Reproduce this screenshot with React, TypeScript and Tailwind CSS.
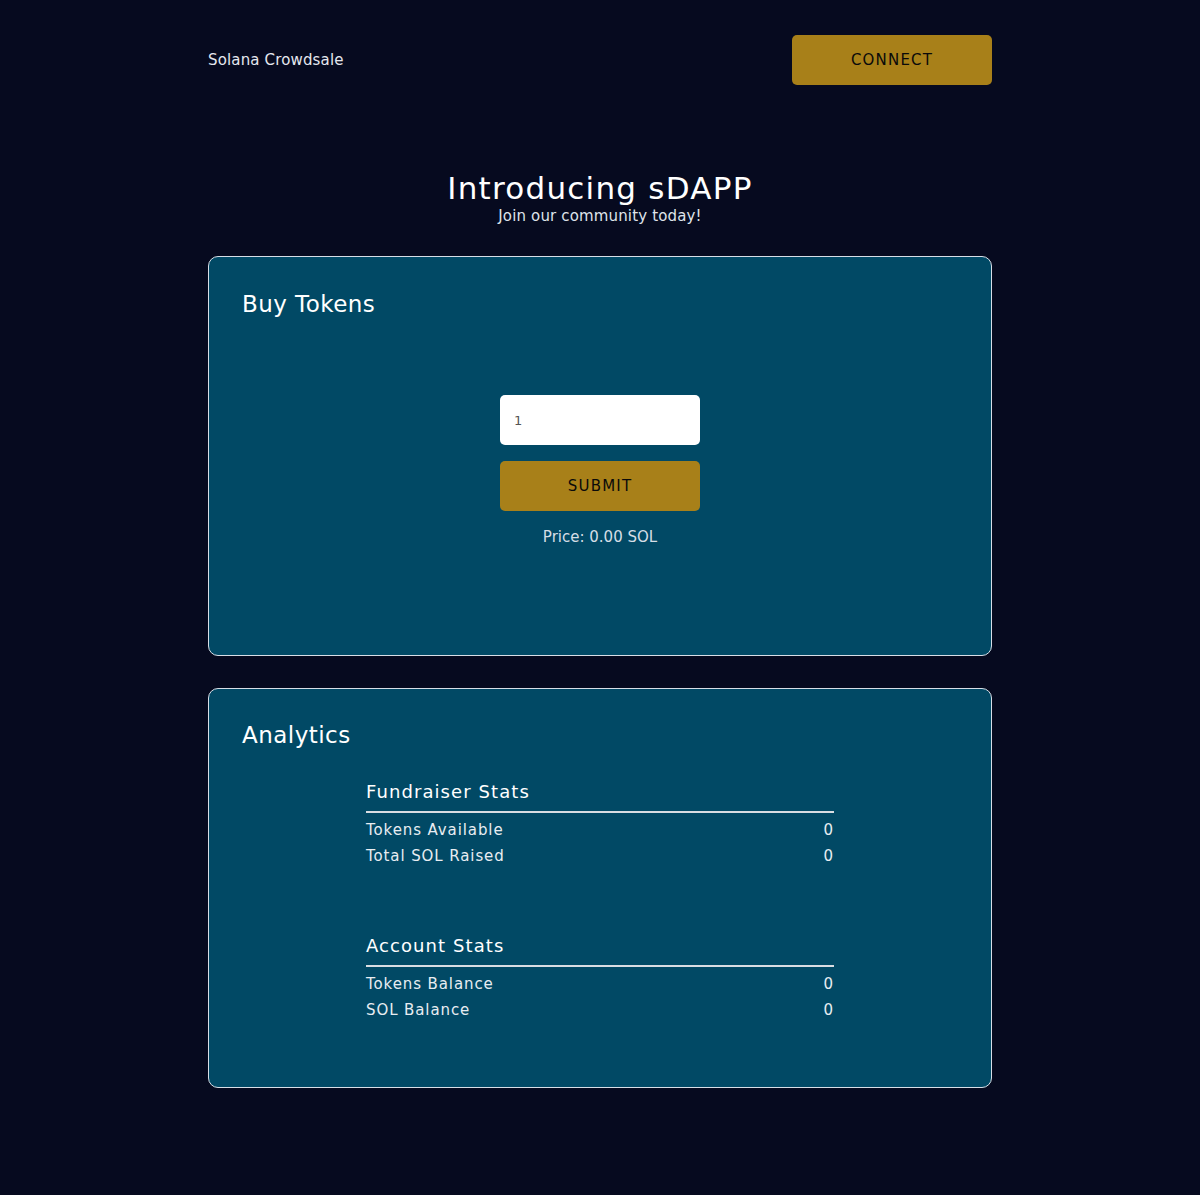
const font = { fontFamily: '"DejaVu Sans", "Liberation Sans", sans-serif' };

function StatsTable({ title, rows }: { title: string; rows: [string, string][] }) {
  return (
    <div className="w-[468px]">
      <div className="text-[18px] tracking-[0.06em] text-white pb-[7px] border-b-2 border-[#d9dde3] leading-[24px]">
        {title}
      </div>
      <div className="pt-[4px]">
        {rows.map(([label, value]) => (
          <div key={label} className="flex justify-between h-[26px] items-center text-[15px] tracking-[0.06em] text-[#e8edf2]">
            <span>{label}</span>
            <span>{value}</span>
          </div>
        ))}
      </div>
    </div>
  );
}

export default function App() {
  return (
    <div className="min-h-[1195px] bg-[#060a1f] text-white" style={font}>
      <div className="w-[784px] mx-auto">
        {/* Nav */}
        <div className="flex items-center justify-between pt-[35px]">
          <span className="text-[15px] text-[#e4e7ee] tracking-[0.01em]">Solana Crowdsale</span>
          <button className="w-[200px] h-[50px] rounded-[5px] bg-[#a88019] text-[#0a0a0a] text-[15px] tracking-[0.08em]">
            CONNECT
          </button>
        </div>

        {/* Hero */}
        <div className="text-center mt-[85px]">
          <h1 className="text-[31px] leading-[36px] tracking-[0.04em] font-normal">Introducing sDAPP</h1>
          <p className="text-[15px] leading-[20px] text-[#dfe3ea] tracking-[0.01em]">Join our community today!</p>
        </div>

        {/* Buy Tokens */}
        <div className="mt-[30px] h-[400px] rounded-[10px] border border-[#d7dee6] bg-[#014965] px-[33px] pt-[32px]">
          <h2 className="text-[23px] leading-[30px] tracking-[0.02em]">Buy Tokens</h2>
          <div className="flex flex-col items-center mt-[76px]">
            <input
              defaultValue="1"
              style={font}
              className="w-[200px] h-[50px] rounded-[5px] bg-white text-[#555] text-[13px] px-[14px] outline-none"
            />
            <button className="mt-[16px] w-[200px] h-[50px] rounded-[5px] bg-[#a88019] text-[#0a0a0a] text-[15px] tracking-[0.08em]">
              SUBMIT
            </button>
            <p className="mt-[15px] text-[15px] text-[#d6dee6]">Price: 0.00 SOL</p>
          </div>
        </div>

        {/* Analytics */}
        <div className="mt-[32px] h-[400px] rounded-[10px] border border-[#d7dee6] bg-[#014965] px-[33px] pt-[31px]">
          <h2 className="text-[23px] leading-[30px] tracking-[0.02em]">Analytics</h2>
          <div className="flex flex-col items-center mt-[30px] gap-[65px]">
            <StatsTable title="Fundraiser Stats" rows={[["Tokens Available", "0"], ["Total SOL Raised", "0"]]} />
            <StatsTable title="Account Stats" rows={[["Tokens Balance", "0"], ["SOL Balance", "0"]]} />
          </div>
        </div>
      </div>
    </div>
  );
}
